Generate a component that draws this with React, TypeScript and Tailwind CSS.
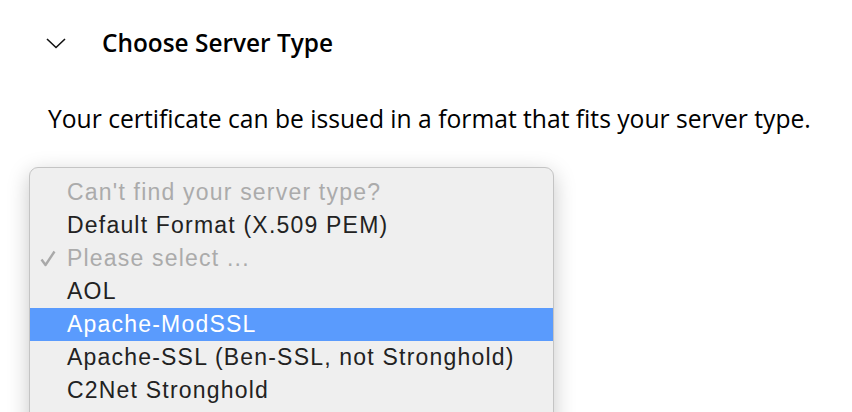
const options = [
  { label: "Can't find your server type?", muted: true },
  { label: 'Default Format (X.509 PEM)' },
  { label: 'Please select ...', muted: true, checked: true },
  { label: 'AOL' },
  { label: 'Apache-ModSSL', active: true },
  { label: 'Apache-SSL (Ben-SSL, not Stronghold)' },
  { label: 'C2Net Stronghold' },
]

const Check = () => (
  <svg width="16" height="17" viewBox="0 0 16 17" className="shrink-0">
    <path
      d="M1.5 9.5 L5.5 15 L14.5 1.5"
      fill="none"
      stroke="#a9a9a9"
      strokeWidth="2.4"
      strokeLinejoin="round"
    />
  </svg>
)

const Chevron = () => (
  <svg width="20" height="11" viewBox="0 0 20 11" className="shrink-0">
    <path d="M1 1 L10 9.5 L19 1" fill="none" stroke="#111" strokeWidth="1.6" />
  </svg>
)

export default function App() {
  return (
    <div className="h-[412px] w-[852px] overflow-hidden bg-white font-['Open_Sans',sans-serif] text-black">
      <div className="flex items-center pt-[28px]">
        <span className="ml-[46px] flex">
          <Chevron />
        </span>
        <h2 className="ml-[36px] text-[24.4px] font-semibold leading-[30px]">Choose Server Type</h2>
      </div>

      <p className="mt-[46px] pl-[48px] text-[24.65px] leading-[30px]">
        Your certificate can be issued in a format that fits your server type.
      </p>

      <div className="ml-[29px] mt-[33px] w-[525px] rounded-t-[9px] border border-[#c4c4c4] bg-[#efefef] pb-[40px] pt-[8px] font-['Liberation_Sans',Arial,sans-serif] text-[23px] tracking-[1.2px] shadow-[0_6px_22px_rgba(0,0,0,0.22)]">
        {options.map((o) => (
          <div
            key={o.label}
            className={`flex h-[33px] items-center ${
              o.active ? 'bg-[#5a9bfd] text-white' : o.muted ? 'text-[#ababab]' : 'text-[#222]'
            }`}
          >
            <span className="flex w-[37px] justify-start pl-[10px]">{o.checked && <Check />}</span>
            <span className="whitespace-nowrap">{o.label}</span>
          </div>
        ))}
      </div>
    </div>
  )
}
